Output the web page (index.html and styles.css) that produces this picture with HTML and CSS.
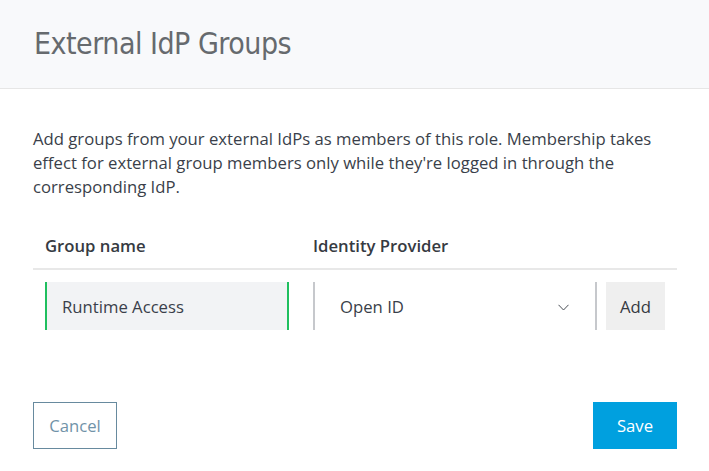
FILE: index.html
```html
<!DOCTYPE html>
<html>
<head>
<meta charset="utf-8">
<link rel="stylesheet" href="styles.css">
</head>
<body>
<div class="modal">
  <header class="modal-header">
    <h1 class="title">External IdP Groups</h1>
  </header>
  <main class="modal-body">
    <p class="intro">Add groups from your external IdPs as members of this role. Membership takes effect for external group members only while they're logged in through the corresponding IdP.</p>
    <div class="table">
      <div class="thead">
        <div class="th col-name">Group name</div>
        <div class="th col-idp">Identity Provider</div>
        <div class="th col-add"></div>
      </div>
      <div class="trow">
        <div class="td col-name"><div class="input">Runtime Access</div></div>
        <div class="td col-idp">
          <div class="select">
            <span>Open ID</span>
            <svg class="chev" width="11" height="7" viewBox="0 0 11 7"><path d="M0.5 0.8 L5.5 6 L10.5 0.8" fill="none" stroke="#4a4f57" stroke-width="1"/></svg>
          </div>
        </div>
        <div class="td col-add"><button class="btn-add">Add</button></div>
      </div>
    </div>
  </main>
  <footer class="modal-footer">
    <button class="btn-cancel">Cancel</button>
    <button class="btn-save">Save</button>
  </footer>
</div>
</body>
</html>
```
FILE: styles.css
```css
html, body {
  margin: 0;
  padding: 0;
  background: #fff;
}
.modal {
  width: 709px;
  height: 471px;
  font-family: "Open Sans", sans-serif;
  font-size: 16.7px;
  color: #3a3f4a;
}
.modal-header {
  background: #f8f9fb;
  border-bottom: 1px solid #e6e6e6;
  box-sizing: border-box;
  height: 89px;
  display: flex;
  align-items: center;
  padding-left: 34px;
}
.title {
  margin: 0;
  margin-top: -2px;
  font-family: "DejaVu Sans Condensed", "DejaVu Sans", sans-serif;
  font-weight: normal;
  font-size: 30px;
  color: #666a6e;
  letter-spacing: -0.5px;
}
.modal-body {
  padding: 38px 32px 0 33px;
}
.intro {
  margin: 0;
  font-size: 16.7px;
  line-height: 24px;
  color: #3a3f4a;
}
.table {
  margin-top: 27px;
}
.thead {
  display: flex;
  border-bottom: 2px solid #e8e8e8;
  height: 44px;
  align-items: center;
  box-sizing: border-box;
  padding-bottom: 4px;
}
.th {
  font-weight: 600;
  color: #363a42;
}
.col-name { width: 256px; padding-left: 12px; flex: none; }
.col-idp { width: 284px; padding-left: 12px; flex: none; }
.col-add { flex: 1; }
.trow {
  display: flex;
  padding-top: 12px;
}
.input {
  width: 244px;
  height: 48px;
  box-sizing: border-box;
  background: #f2f3f5;
  border-left: 2px solid #1fbf5f;
  border-right: 2px solid #1fbf5f;
  display: flex;
  align-items: center;
  padding-left: 15px;
  color: #3a3f4a;
}
.select {
  height: 48px;
  width: 284px;
  box-sizing: border-box;
  border-left: 2px solid #c6c8cc;
  border-right: 2px solid #c6c8cc;
  display: flex;
  align-items: center;
  justify-content: space-between;
  padding: 0 26px 0 25px;
  color: #3a3f4a;
}
.chev { margin-top: 3px; }
.td.col-add { padding-left: 9px; }
.btn-add {
  height: 48px;
  width: 59px;
  border: none;
  background: #efefef;
  font-family: "Open Sans", sans-serif;
  font-size: 16.7px;
  color: #363a42;
  padding: 0;
}
.modal-footer {
  display: flex;
  justify-content: space-between;
  padding: 72px 32px 0 33px;
}
.btn-cancel {
  width: 84px;
  height: 47px;
  background: #fff;
  border: 1px solid #678a9e;
  font-family: "Open Sans", sans-serif;
  font-size: 16.7px;
  color: #7193a8;
  padding: 0;
}
.btn-save {
  width: 84px;
  height: 47px;
  background: #00a0df;
  border: none;
  font-family: "Open Sans", sans-serif;
  font-size: 16.7px;
  color: #fff;
  padding: 0;
}
```
